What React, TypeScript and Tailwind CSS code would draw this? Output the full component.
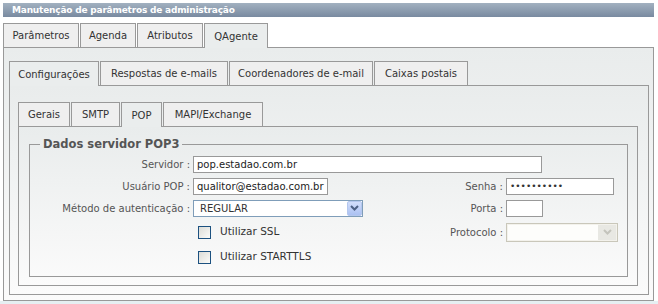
import React from 'react';

const Tab = ({ label, w, active }: { label: string; w: string; active?: boolean }) => (
  <div
    className={
      active
        ? `${w} h-[25px] -mb-px relative z-10 border border-b-0 border-[#999] bg-[#eaeded] flex items-center justify-center text-[#333]`
        : `${w} h-[24px] border border-b-0 border-[#999] bg-[#efefef] flex items-center justify-center text-[#333]`
    }
  >
    {label}
  </div>
);

const Chevron = ({ color }: { color: string }) => (
  <svg width="9" height="6" viewBox="0 0 9 6">
    <path d="M1 1 L4.5 4.5 L8 1" fill="none" stroke={color} strokeWidth="2" />
  </svg>
);

const Checkbox = ({ label }: { label: string }) => (
  <div className="flex items-center ml-[5px]">
    <div className="w-[13px] h-[13px] border border-[#1c5180] bg-gradient-to-br from-[#dcdcd7] to-[#fbfbf9]" />
    <span className="ml-[9px] text-[10.5px] text-[#333]">{label}</span>
  </div>
);

const Label = ({ text, w }: { text: string; w: string }) => (
  <div className={`${w} text-right text-[#555] shrink-0`}>{text}</div>
);

const Input = ({ w, value, password }: { w: string; value?: string; password?: boolean }) => (
  <div className={`${w} h-[17px] border border-[#999] bg-white flex items-center pl-[3px] text-[#222] overflow-hidden`}>
    {password ? <span className="text-[9px] leading-none text-[#333]">••••••••••</span> : value}
  </div>
);

export default function App() {
  return (
    <div className="w-[658px] h-[304px] bg-white font-['DejaVu_Sans',sans-serif] text-[10px] overflow-hidden">
      <div className="mt-[3px] ml-[3px] w-[651px] h-[14px] bg-gradient-to-b from-[#a2b1c0] to-[#798aa0] pl-[9px] text-white font-bold text-[9px] tracking-[-0.2px] leading-[14px]">
        Manutenção de parâmetros de administração
      </div>

      <div className="mt-[6px] ml-[3px] flex items-end gap-px">
        <Tab label="Parâmetros" w="w-[76px]" />
        <Tab label="Agenda" w="w-[56px]" />
        <Tab label="Atributos" w="w-[66px]" />
        <Tab label="QAgente" w="w-[64px]" active />
      </div>

      <div className="ml-[3px] w-[651px] border border-[#999] bg-gradient-to-b from-[#e9ecec] to-[#fbfbfb] pt-[13px] pl-[5px] pb-[5px]">
        <div className="flex items-end gap-px">
          <Tab label="Configurações" w="w-[90px]" active />
          <Tab label="Respostas de e-mails" w="w-[128px]" />
          <Tab label="Coordenadores de e-mail" w="w-[144px]" />
          <Tab label="Caixas postais" w="w-[94px]" />
        </div>

        <div className="w-[640px] border border-[#999] bg-gradient-to-b from-[#e9ecec] to-[#fbfbfb] pt-[16px] pl-[8px] pb-[8px]">
          <div className="flex items-end gap-px">
            <Tab label="Gerais" w="w-[52px]" />
            <Tab label="SMTP" w="w-[49px]" />
            <Tab label="POP" w="w-[41px]" active />
            <Tab label="MAPI/Exchange" w="w-[100px]" />
          </div>

          <div className="w-[620px] border border-[#999] bg-gradient-to-b from-[#e9ecec] to-[#fbfbfb] pt-[9px] pl-[10px] pb-[8px]">
            <fieldset className="w-[599px] border border-[#999]">
              <legend className="ml-[10px] px-[3px] text-[11.5px] leading-[16px] font-bold text-[#555]">
                Dados servidor POP3
              </legend>
              <div className="pt-[1px] pb-[7px]">
                <div className="h-[22px] flex items-center">
                  <Label text="Servidor :" w="w-[160px]" />
                  <div className="ml-[3px]">
                    <Input w="w-[349px]" value="pop.estadao.com.br" />
                  </div>
                </div>

                <div className="h-[22px] flex items-center">
                  <Label text="Usuário POP :" w="w-[160px]" />
                  <div className="ml-[3px] w-[207px]">
                    <Input w="w-[135px]" value="qualitor@estadao.com.br" />
                  </div>
                  <Label text="Senha :" w="w-[103px]" />
                  <div className="ml-[3px]">
                    <Input w="w-[108px]" password />
                  </div>
                </div>

                <div className="h-[22px] flex items-center">
                  <Label text="Método de autenticação :" w="w-[160px]" />
                  <div className="ml-[3px] w-[207px]">
                    <div className="w-[170px] h-[17px] border border-[#7f9db9] bg-white flex items-center">
                      <span className="pl-[6px] text-[#333]">REGULAR</span>
                      <div className="ml-auto w-[15px] h-[15px] rounded-[2px] border border-[#b4c7ee] bg-gradient-to-b from-[#d2defb] to-[#abc1f2] flex items-center justify-center">
                        <Chevron color="#4d6185" />
                      </div>
                    </div>
                  </div>
                  <Label text="Porta :" w="w-[103px]" />
                  <div className="ml-[3px]">
                    <Input w="w-[37px]" />
                  </div>
                </div>

                <div className="h-[26px] flex items-center">
                  <div className="w-[160px] shrink-0" />
                  <div className="ml-[3px] w-[207px]">
                    <Checkbox label="Utilizar SSL" />
                  </div>
                  <Label text="Protocolo :" w="w-[103px]" />
                  <div className="ml-[3px] w-[112px] h-[19px] border border-[#c9c7ba] bg-[#f3f2ec] p-px flex">
                    <div className="flex-1 bg-[#fdfdfb]" />
                    <div className="w-[18px] bg-[#e8e8e3] flex items-center justify-center">
                      <Chevron color="#c4c4bc" />
                    </div>
                  </div>
                </div>

                <div className="h-[24px] flex items-center">
                  <div className="w-[160px] shrink-0" />
                  <div className="ml-[3px] w-[207px]">
                    <Checkbox label="Utilizar STARTTLS" />
                  </div>
                </div>
              </div>
            </fieldset>
          </div>
        </div>
      </div>
      <div className="h-[4px] bg-[#e6eff2]" />
    </div>
  );
}
